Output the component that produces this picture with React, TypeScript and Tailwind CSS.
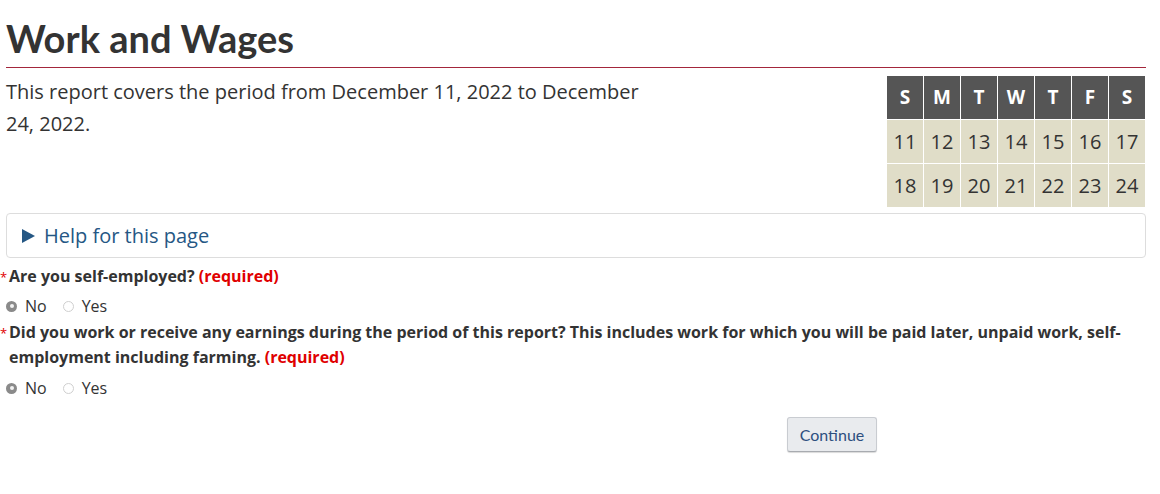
import React from "react";

const days = ["S", "M", "T", "W", "T", "F", "S"];
const rows = [
  [11, 12, 13, 14, 15, 16, 17],
  [18, 19, 20, 21, 22, 23, 24],
];

function Radio({ checked, label }: { checked?: boolean; label: string }) {
  return (
    <label className="flex items-center gap-[8px]">
      {checked ? (
        <span className="w-[11px] h-[11px] rounded-full bg-[#8a8a8a] flex items-center justify-center">
          <span className="w-[4px] h-[4px] rounded-full bg-[#f2f2f2]" />
        </span>
      ) : (
        <span className="w-[11px] h-[11px] rounded-full border border-[#cfcfcf] bg-white" />
      )}
      <span>{label}</span>
    </label>
  );
}

function RadioRow() {
  return (
    <div className="flex items-center gap-[16px] pl-[6px] text-[16px] text-[#333] h-[24px]">
      <Radio checked label="No" />
      <Radio label="Yes" />
    </div>
  );
}

function Star() {
  return (
    <span className="inline-block w-[9px] -ml-[9px] text-[#e00000] font-normal text-[13px] leading-[10px] align-baseline">
      *
    </span>
  );
}

export default function App() {
  return (
    <div
      className="bg-white w-[1160px] h-[494px] text-[#333]"
      style={{ fontFamily: '"Open Sans", "Liberation Sans", sans-serif' }}
    >
      <div className="pl-[6px] w-[1146px] pt-[14px]">
        <h1
          className="text-[38px] font-bold leading-[48px] text-[#333] pb-[5px] border-b border-[#a3263b]"
          style={{ fontFamily: 'Lato, "Liberation Sans", sans-serif' }}
        >
          Work and Wages
        </h1>
        <div className="flex justify-between pt-[8px]">
          <p className="w-[650px] text-[20px] leading-[32px]">
            This report covers the period from December 11, 2022 to December 24, 2022.
          </p>
          <div className="grid grid-cols-[repeat(7,36px)] auto-rows-[43px] gap-px mr-[1px]">
            {days.map((d, i) => (
              <div
                key={"h" + i}
                className="bg-[#555555] text-white font-bold text-[19px] flex items-center justify-center"
              >
                {d}
              </div>
            ))}
            {rows.flat().map((n) => (
              <div
                key={n}
                className="bg-[#e0ddc8] text-[#333] text-[20px] flex items-center justify-center"
              >
                {n}
              </div>
            ))}
          </div>
        </div>
        <div className="mt-[6px] h-[45px] border border-[#dddddd] rounded-[4px] flex items-center pl-[15px] text-[#255784] text-[20px]">
          <svg width="13" height="14" viewBox="0 0 13 14" className="mr-[9px]">
            <path d="M0 0 L13 7 L0 14 Z" fill="#255784" />
          </svg>
          <span>Help for this page</span>
        </div>
      </div>
      <div className="pt-[6px] text-[16px]">
        <div className="font-bold leading-[24px] pl-[9px]">
          <Star />
          Are you self-employed? <span className="text-[#e00000]">(required)</span>
        </div>
        <div className="mt-[6px]">
          <RadioRow />
        </div>
        <div className="font-bold leading-[25px] mt-[2px] pl-[9px] pr-[20px]">
          <Star />
          Did you work or receive any earnings during the period of this report? This includes work for which
          you will be paid later, unpaid work, self-employment including farming.{" "}
          <span className="text-[#e00000]">(required)</span>
        </div>
        <div className="mt-[6px]">
          <RadioRow />
        </div>
        <div className="flex pl-[787px] mt-[17px]">
          <button
            className="w-[90px] h-[35px] bg-[#e9ebee] border border-[#c9ccd1] border-b-[#a8abb0] rounded-[3px] text-[16px] text-[#2d4f7f] shadow-[0_1px_1px_rgba(0,0,0,0.15)]"
            style={{ fontFamily: 'Lato, "Liberation Sans", sans-serif' }}
          >
            Continue
          </button>
        </div>
      </div>
    </div>
  );
}
